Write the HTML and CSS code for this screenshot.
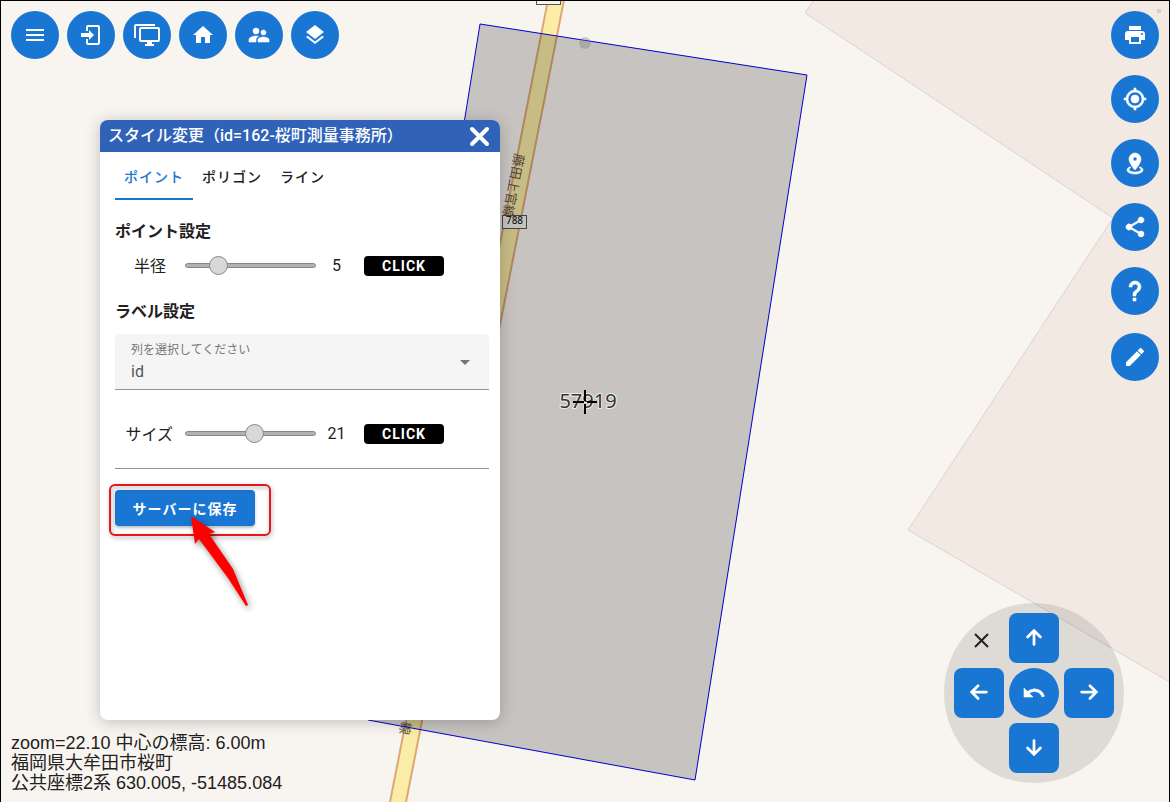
FILE: index.html
```html
<!DOCTYPE html>
<html lang="ja">
<head>
<meta charset="utf-8">
<title>スタイル変更</title>
<link rel="stylesheet" href="styles.css">
</head>
<body>
<main class="app">
  <svg class="map" viewBox="0 0 1170 802" preserveAspectRatio="xMidYMid slice" role="img" aria-label="地図">
    <rect width="1170" height="802" fill="#f8f4f0"/>
    <path class="building" d="M818 -6 805 13 1113 218 908 530 1180 688V-6Z"/>
    <path fill="#fbeca7" d="M548 0H564L407 802H390Z"/>
    <path class="road-edge" d="M548 0 390 802M564 0 406 802"/>
    <text class="road-name" transform="translate(515 153) rotate(101)">藤田上官線</text>
    <text class="road-name" transform="translate(402 721) rotate(101)">線</text>
    <rect class="road-sign" x="536.500" y="-8.500" width="24" height="13"/>
    <rect class="road-sign" x="502.500" y="215.500" width="24" height="13"/>
    <text class="road-number" x="514.500" y="224">788</text>
    <path class="parcel" d="M480 24 807 75 695 780 368 720Z"/>
    <circle cx="585" cy="43" r="6" fill="#777" fill-opacity=".35"/>
    <rect x="1157" y="9" width="4" height="4" fill="#d6cec8"/>
    <text class="parcel-label" x="588" y="408">57919</text>
    <path d="M573 402H584M587 402H597M585 390V401M585 404V414" stroke="#000" stroke-width="2"/>
  </svg>

  <nav class="toolbar" aria-label="メインメニュー">
    <button class="round" aria-label="メニュー"><svg viewBox="0 0 24 24"><path d="M3 6h18v2H3V6m0 5h18v2H3v-2m0 5h18v2H3v-2Z"/></svg></button>
    <button class="round" aria-label="ログイン"><svg viewBox="0 0 24 24"><path d="M19 2H9a2 2 0 0 0-2 2v4h2V4h10v16H9v-4H7v4a2 2 0 0 0 2 2h10a2 2 0 0 0 2-2V4a2 2 0 0 0-2-2M10 17v-3H2v-4h8V7l5 5-5 5"/></svg></button>
    <button class="round" aria-label="画面"><svg class="wide" viewBox="0 0 26 22"><path d="M24 16V5H7v11h17m0-13a2 2 0 0 1 2 2v11a2 2 0 0 1-2 2h-6v2h2v2h-9v-2h2v-2H7a2 2 0 0 1-2-2V5a2 2 0 0 1 2-2h17M2 14H0V2a2 2 0 0 1 2-2h19v2H2v12Z"/></svg></button>
    <button class="round" aria-label="ホーム"><svg viewBox="0 0 24 24"><path d="M10 20v-6h4v6h5v-8h3L12 3 2 12h3v8h5Z"/></svg></button>
    <button class="round" aria-label="グループ"><svg class="bold" viewBox="0 0 24 24"><path d="M16.500 12a2.500 2.500 0 1 0 0-5 2.500 2.500 0 0 0 0 5M9 11a3 3 0 1 0 0-6 3 3 0 0 0 0 6m7.500 3c-1.830 0-5.500.920-5.500 2.750V19h11v-2.250c0-1.830-3.670-2.750-5.500-2.750M9 13c-2.330 0-7 1.170-7 3.500V19h7v-2.250c0-.850.330-2.340 2.370-3.470C10.500 13.100 9.660 13 9 13"/></svg></button>
    <button class="round" aria-label="レイヤー"><svg viewBox="0 0 24 24"><path d="m12 16 9-7-9-7-9 7 9 7m0 2.540-7.380-5.740L3 14.070l9 7 9-7-1.630-1.270L12 18.540Z"/></svg></button>
  </nav>

  <nav class="sidebar" aria-label="地図ツール">
    <button class="round" aria-label="印刷"><svg viewBox="0 0 24 24"><path d="M18 3H6v4h12M19 12a1 1 0 1 1 0-2 1 1 0 0 1 0 2m-3 7H8v-5h8m3-6H5a3 3 0 0 0-3 3v6h4v4h12v-4h4v-6a3 3 0 0 0-3-3Z"/></svg></button>
    <button class="round" aria-label="現在地"><svg class="bold" viewBox="0 0 24 24"><path d="M12 8a4 4 0 1 1 0 8 4 4 0 0 1 0-8m-8.950 5H1v-2h2.050A9 9 0 0 1 11 3.050V1h2v2.050A9 9 0 0 1 20.950 11H23v2h-2.050A9 9 0 0 1 13 20.950V23h-2v-2.050A9 9 0 0 1 3.050 13M12 5a7 7 0 1 0 0 14 7 7 0 0 0 0-14Z"/></svg></button>
    <button class="round" aria-label="ストリートビュー"><svg class="bold" viewBox="0 0 24 24"><path d="M12 2a6 6 0 0 0-6 6c0 4.500 6 11 6 11s6-6.500 6-11a6 6 0 0 0-6-6m0 4a2 2 0 1 1 0 4 2 2 0 0 1 0-4m8 13c0 2.210-3.580 4-8 4s-8-1.790-8-4c0-1.290 1.220-2.440 3.110-3.170l.640.910C6.670 17.190 6 17.810 6 18.500c0 1.380 2.690 2.500 6 2.500s6-1.120 6-2.500c0-.690-.670-1.310-1.750-1.760l.640-.910C18.780 16.560 20 17.710 20 19Z"/></svg></button>
    <button class="round" aria-label="共有"><svg class="bold" viewBox="0 0 24 24"><path d="M18 16.080c-.760 0-1.440.300-1.960.770L8.910 12.700a3.300 3.300 0 0 0 0-1.390l7.050-4.120A3 3 0 1 0 15.090 5.700L8.040 9.820a3 3 0 1 0 0 4.370l7.120 4.150A2.920 2.920 0 1 0 18 16.080Z"/></svg></button>
    <button class="round" aria-label="ヘルプ"><svg class="bold" viewBox="0 0 24 24"><path d="M10 19h3v3h-3v-3m2-17c5.350.220 7.680 5.620 4.500 9.670-.830 1-2.170 1.660-2.830 2.500C13 15 13 16 13 17h-3c0-1.670 0-3.080.670-4.080.660-1 2-1.590 2.830-2.250C15.920 8.430 15.320 5.260 12 5a3 3 0 0 0-3 3H6a6 6 0 0 1 6-6Z"/></svg></button>
    <button class="round edit" aria-label="編集"><svg viewBox="0 0 24 24"><path d="m20.710 7.040-2.340 2.330-3.750-3.750 2.340-2.330a1 1 0 0 1 1.410 0l2.340 2.340a1 1 0 0 1 0 1.410M3 17.250 14.060 6.180l3.750 3.750L6.750 21H3v-3.750Z"/></svg></button>
  </nav>

  <section class="dialog" aria-labelledby="dialog-title">
    <header class="dialog-head">
      <h1 id="dialog-title">スタイル変更（id=162-桜町測量事務所）</h1>
      <button class="close" aria-label="閉じる"><svg viewBox="0 0 24 24"><path d="m4 5 15 15M19 5 4 20"/></svg></button>
    </header>
    <div class="tabs" role="tablist">
      <button class="tab tab-active" role="tab" aria-selected="true">ポイント</button>
      <button class="tab" role="tab" aria-selected="false">ポリゴン</button>
      <button class="tab" role="tab" aria-selected="false">ライン</button>
    </div>
    <div class="dialog-body">
      <h2>ポイント設定</h2>
      <div class="setting">
        <label for="radius">半径</label>
        <input id="radius" type="range" min="0" max="24" value="5">
        <output for="radius">5</output>
        <button class="click">CLICK</button>
      </div>
      <h2 class="label-heading">ラベル設定</h2>
      <div class="field">
        <label for="column">列を選択してください</label>
        <select id="column"><option>id</option></select>
      </div>
      <div class="setting setting-size">
        <label for="size">サイズ</label>
        <input id="size" type="range" min="0" max="39" value="21">
        <output for="size">21</output>
        <button class="click">CLICK</button>
      </div>
      <hr>
      <div class="save-area">
        <button class="save">サーバーに保存</button>
        <div class="highlight"></div>
        <svg class="pointer" viewBox="0 0 70 100" aria-hidden="true"><path d="M5 4 29 20 23 22 47 57 62 93 60 94 42 66 13 27 9 32Z"/></svg>
      </div>
    </div>
  </section>

  <section class="pad" aria-label="移動">
    <button class="pad-close" aria-label="閉じる"><svg viewBox="0 0 24 24"><path d="m6 6 13 13M19 6 6 19"/></svg></button>
    <button class="move up" aria-label="上"><svg viewBox="0 0 24 24"><path d="M12 19V5M5 11l7-7 7 7"/></svg></button>
    <button class="move left" aria-label="左"><svg viewBox="0 0 24 24"><path d="M20 11H5M11 4l-7 7 7 7"/></svg></button>
    <button class="move undo" aria-label="元に戻す"><svg viewBox="0 0 24 24"><path d="M12.500 8c-2.650 0-5.050 1-6.900 2.600L2 7v9h9l-3.620-3.620A8 8 0 0 1 20.050 16l2.370-.780A10.500 10.500 0 0 0 12.500 8Z"/></svg></button>
    <button class="move right" aria-label="右"><svg viewBox="0 0 24 24"><path d="M4 11h15M13 4l7 7-7 7"/></svg></button>
    <button class="move down" aria-label="下"><svg viewBox="0 0 24 24"><path d="M12 4v15M5 12l7 7 7-7"/></svg></button>
  </section>

  <footer class="status">
    <div>zoom=22.10 中心の標高: 6.00m</div>
    <div>福岡県大牟田市桜町</div>
    <div>公共座標2系 630.005, -51485.084</div>
  </footer>
</main>
</body>
</html>
```
FILE: styles.css
```css
* { box-sizing: border-box; }
body { margin: 0; font-family: Roboto, "Noto Sans CJK JP", sans-serif; color: #212121; }
button { font: inherit; color: inherit; border: 0; padding: 0; cursor: pointer; }
h1, h2 { margin: 0; }

.app {
  position: relative;
  height: 100vh;
  min-height: 760px;
  overflow: hidden;
  border: 1px solid #000;
  border-bottom: 0;
}
.map { position: absolute; inset: -1px; width: calc(100% + 2px); height: calc(100% + 1px); }
.building { fill: #f2e9e2; stroke: #ddd3cd; }
.road-edge { fill: none; stroke: #dda878; stroke-width: 2; }
.road-name { font: 13px "Noto Sans CJK JP", sans-serif; fill: #65594a; }
.road-sign { fill: #f7f4ef; stroke: #555; }
.road-number { font: 500 10px "Noto Sans", sans-serif; fill: #222; text-anchor: middle; }
.parcel { fill: #000; fill-opacity: .2; stroke: #0000d0; }
.parcel-label { font: 20px "Noto Sans", sans-serif; fill: #333; stroke: #eee; stroke-width: 2; paint-order: stroke; text-anchor: middle; }

/* Floating tools */
.toolbar { position: absolute; top: 10px; left: 10px; display: flex; gap: 8px; }
.sidebar { position: absolute; top: 10px; right: 10px; display: flex; flex-direction: column; gap: 16px; }
.round {
  display: grid;
  place-items: center;
  width: 48px;
  height: 48px;
  border-radius: 50%;
  background: #1976d2;
}
.round svg { width: 24px; height: 24px; fill: #fff; }
.round .wide { width: 26px; height: 22px; }
.round .bold { stroke: #fff; stroke-width: .6; }
.edit { margin-top: 2px; }

/* Style dialog */
.dialog {
  position: absolute;
  top: 119px;
  left: 99px;
  width: 400px;
  min-height: 600px;
  border-radius: 8px;
  background: #fff;
  box-shadow: 0 2px 16px rgba(0, 0, 0, .22);
}
.dialog-head {
  display: flex;
  justify-content: space-between;
  align-items: center;
  height: 32px;
  padding: 0 8px;
  border-radius: 8px 8px 0 0;
  background: #3063b7;
  color: #fff;
}
.dialog-head h1 { font-size: 16px; font-weight: 500; line-height: 32px; }
.close { width: 24px; height: 24px; background: none; }
.close svg { display: block; width: 24px; height: 24px; fill: none; stroke: #fff; stroke-width: 4; stroke-linecap: round; }
.tabs { display: flex; padding: 0 15px; }
.tab {
  height: 48px;
  padding: 2px 9px 0;
  border-bottom: 2px solid transparent;
  background: none;
  font-size: 14px;
  font-weight: 500;
  letter-spacing: 1px;
}
.tab-active { border-color: #1976d2; color: #1976d2; }
.dialog-body { padding: 20px 11px 15px 15px; }
h2 { font-size: 16px; line-height: 24px; }
.setting { display: flex; align-items: center; height: 44px; }
.setting label { width: 69px; padding: 0 18px 3px 0; text-align: right; white-space: nowrap; }
.setting output { width: 33px; margin-left: 4px; padding-bottom: 2px; text-align: center; }
input[type="range"] { width: 131px; height: 20px; margin: 0 0 2px 1px; appearance: none; background: none; }
input[type="range"]::-webkit-slider-runnable-track { height: 5px; border: 1px solid #888; border-radius: 3px; background: #b2b2b2; }
input[type="range"]::-webkit-slider-thumb { width: 19px; height: 19px; margin-top: -8px; appearance: none; border: 1px solid #888; border-radius: 50%; background: #d8d8d8; }
.click { width: 80px; height: 20px; margin-left: 11px; border-radius: 4px; background: #000; color: #fff; font-size: 14px; font-weight: 700; letter-spacing: 1px; line-height: 20px; }
.label-heading { margin-top: 12px; }
.field { position: relative; height: 56px; margin-top: 10px; border-bottom: 1px solid #919191; border-radius: 4px 4px 0 0; background: #f5f5f5; }
.field label { position: absolute; top: 6px; left: 16px; color: #777; font-size: 12px; line-height: 20px; }
.field select { width: 100%; height: 55px; padding: 19px 16px 0; border: 0; appearance: none; background: none; color: #555; font: inherit; }
.field::after { content: ""; position: absolute; top: 26px; right: 19px; border: 5px solid transparent; border-top-color: #757575; border-bottom: 0; }
.setting-size { margin-top: 22px; }
.setting-size label { padding-right: 11px; }
hr { height: 1px; margin: 12px 0 21px; border: 0; background: #919191; }
.dialog-body .field, .dialog-body hr { width: 374px; }
.save-area { position: relative; }
.save { width: 140px; height: 36px; border-radius: 4px; background: #1976d2; color: #fff; font-size: 14px; font-weight: 700; letter-spacing: 1px; box-shadow: 0 2px 3px rgba(0, 0, 0, .25); }
.highlight { position: absolute; top: -6px; left: -6px; width: 162px; height: 52px; border: 2px solid #e5171d; border-radius: 6px; filter: drop-shadow(1px 2px 2px rgba(0, 0, 0, .35)); pointer-events: none; }
.pointer { position: absolute; top: 22px; left: 71px; width: 70px; height: 100px; fill: #f00; filter: drop-shadow(2px 3px 3px rgba(0, 0, 0, .45)); pointer-events: none; }

/* Movement pad */
.pad {
  position: absolute;
  right: 45px;
  bottom: 19px;
  display: grid;
  grid-template-columns: repeat(3, 50px);
  gap: 5px;
  padding: 10px;
  border-radius: 50%;
  background: rgba(0, 0, 0, .1);
}
.move { display: grid; place-items: center; width: 50px; height: 50px; border-radius: 8px; background: #1976d2; }
.move svg { width: 22px; height: 22px; fill: none; stroke: #fff; stroke-width: 3; stroke-linecap: round; }
.up { grid-area: 1 / 2; }
.left { grid-area: 2 / 1; }
.undo { grid-area: 2 / 2; border-radius: 50%; }
.move.undo svg { width: 24px; height: 24px; fill: #fff; stroke-width: .6; }
.right { grid-area: 2 / 3; }
.down { grid-area: 3 / 2; }
.pad-close { display: grid; grid-area: 1 / 1; place-items: center; padding: 3px 0 0 3px; background: none; }
.pad-close svg { width: 24px; height: 24px; fill: none; stroke: #222; stroke-width: 2; }

.status { position: absolute; left: 10px; bottom: 9px; font: 18px/20px "Liberation Sans", "Noto Sans CJK JP", sans-serif; }
```
